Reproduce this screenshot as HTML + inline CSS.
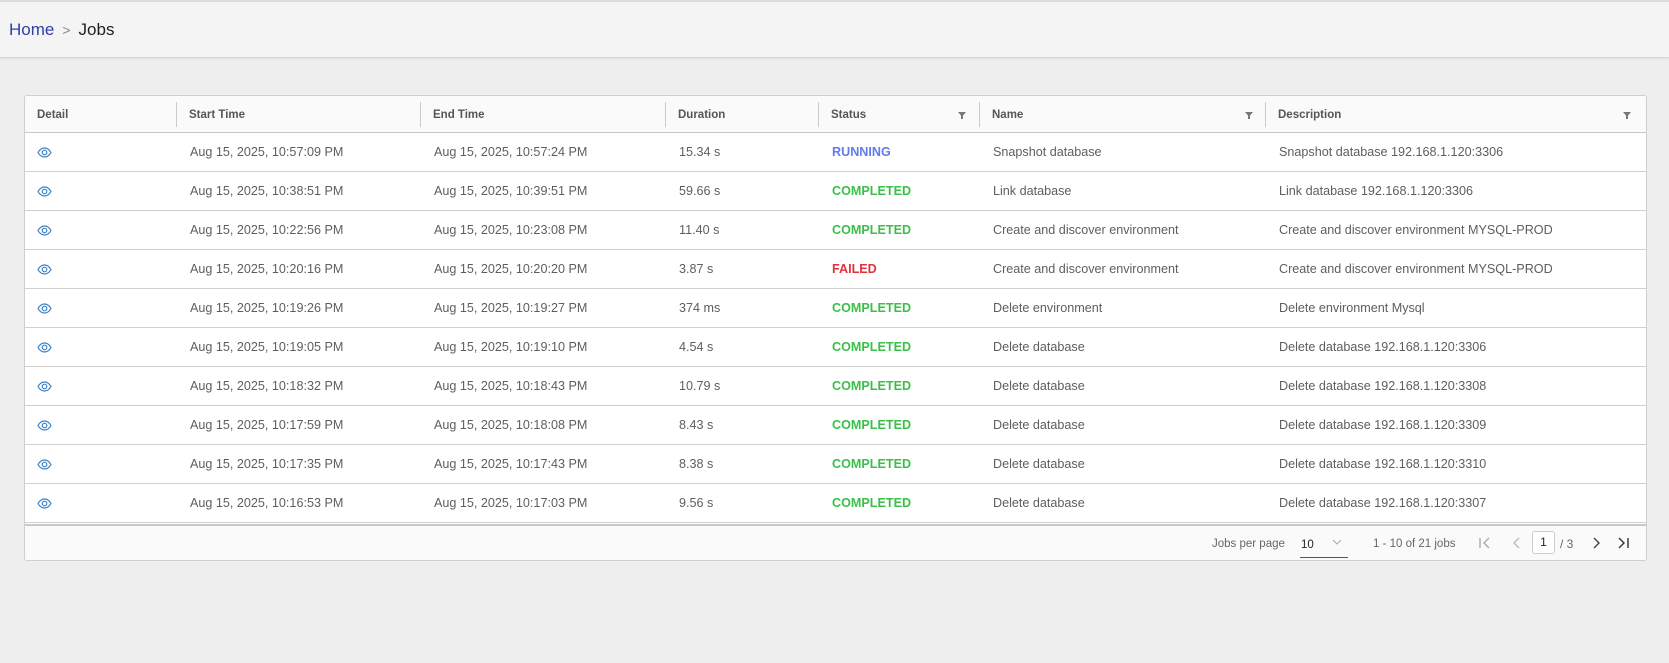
<!DOCTYPE html>
<html><head><style>
*{box-sizing:border-box;margin:0;padding:0}
body{width:1669px;height:663px;background:#eeeeee;font-family:"Liberation Sans",sans-serif;position:relative;overflow:hidden}
.top{position:absolute;left:0;top:0;width:1669px;height:58px;background:#f4f4f4;border-top:2px solid #dcdcdc;border-bottom:1px solid #d8d8d8;box-shadow:0 1px 2px rgba(0,0,0,.08)}
.bc{position:absolute;left:9px;top:18px;font-size:17px;color:#222}
.bc a{color:#2f3fa8;text-decoration:none}
.bc .s{color:#888;margin:0 8px;font-size:14px}
.tbl{position:absolute;left:24px;top:95px;width:1623px;height:466px;background:#fff;border:1px solid #cfcfcf;border-radius:3px;overflow:hidden}
.hd{position:absolute;left:0;top:0;width:100%;height:37px;background:#fafafa;border-bottom:1px solid #c8c8c8}
.c{position:absolute;white-space:nowrap}
.h{font-size:11.5px;font-weight:bold;color:#565656;top:13px}
.sep{position:absolute;top:6px;width:1px;height:25px;background:#ccc}
.row{position:absolute;left:0;width:100%;height:39px;border-bottom:1px solid #d0d0d0;font-size:12.6px;color:#5e5e5e}
.row .c{top:12px}
.ft{position:absolute;left:0;top:428px;width:100%;height:38px;background:#fafafa;border-top:2px solid #c8c8c8;font-size:11.5px;color:#666}
.run{color:#6479ee;font-weight:bold}.ok{color:#3cbf4a;font-weight:bold}.fail{color:#e0323e;font-weight:bold}
svg.f{position:absolute;top:14px}
</style></head><body>
<div class="top"><div class="bc"><a>Home</a><span class="s">&gt;</span>Jobs</div></div>
<div class="tbl">
<div class="hd">
<div class="c h" style="left:12px">Detail</div>
<div class="sep" style="left:151px"></div><div class="c h" style="left:164px">Start Time</div>
<div class="sep" style="left:395px"></div><div class="c h" style="left:408px">End Time</div>
<div class="sep" style="left:640px"></div><div class="c h" style="left:653px">Duration</div>
<div class="sep" style="left:793px"></div><div class="c h" style="left:806px">Status</div>
<svg class="f" style="left:932px" width="10" height="10" viewBox="0 0 10 10"><path d="M1 2h8L6 5.5V9H4V5.5z" fill="#777"/></svg>
<div class="sep" style="left:954px"></div><div class="c h" style="left:967px">Name</div>
<svg class="f" style="left:1219px" width="10" height="10" viewBox="0 0 10 10"><path d="M1 2h8L6 5.5V9H4V5.5z" fill="#777"/></svg>
<div class="sep" style="left:1240px"></div><div class="c h" style="left:1253px">Description</div>
<svg class="f" style="left:1597px" width="10" height="10" viewBox="0 0 10 10"><path d="M1 2h8L6 5.5V9H4V5.5z" fill="#777"/></svg>
</div>
<div id="rows"></div>
<div class="ft">
<div class="c" style="left:1187px;top:12px">Jobs per page</div>
<div class="c" style="left:1276px;top:13px;color:#222">10</div>
<svg style="position:absolute;left:1307px;top:12px" width="10" height="8" viewBox="0 0 10 8"><path d="M1 2l4 4 4-4" stroke="#aaa" fill="none"/></svg>
<div style="position:absolute;left:1275px;top:31px;width:48px;height:1px;background:#556"></div>
<div class="c" style="left:1348px;top:12px">1 - 10 of 21 jobs</div>
<svg style="position:absolute;left:1453px;top:10px" width="14" height="14" viewBox="0 0 14 14"><path d="M2 2v10M11 2L6 7l5 5" stroke="#aaa" fill="none" stroke-width="1.4"/></svg>
<svg style="position:absolute;left:1485px;top:10px" width="14" height="14" viewBox="0 0 14 14"><path d="M9 2L4 7l5 5" stroke="#bbb" fill="none" stroke-width="1.4"/></svg>
<div style="position:absolute;left:1507px;top:5px;width:23px;height:23px;border:1px solid #ccc;border-radius:3px;background:#fff;font-size:12px;color:#222;text-align:center;line-height:21px">1</div>
<div class="c" style="left:1535px;top:11px;font-size:12px">/ 3</div>
<svg style="position:absolute;left:1564px;top:10px" width="14" height="14" viewBox="0 0 14 14"><path d="M5 2l5 5-5 5" stroke="#444" fill="none" stroke-width="1.4"/></svg>
<svg style="position:absolute;left:1591px;top:10px" width="14" height="14" viewBox="0 0 14 14"><path d="M3 2l5 5-5 5M12 2v10" stroke="#333" fill="none" stroke-width="1.4"/></svg>
</div>
</div>
<script>
var d=[["10:57:09","10:57:24","15.34 s","RUNNING","run","Snapshot database","Snapshot database 192.168.1.120:3306"],
["10:38:51","10:39:51","59.66 s","COMPLETED","ok","Link database","Link database 192.168.1.120:3306"],
["10:22:56","10:23:08","11.40 s","COMPLETED","ok","Create and discover environment","Create and discover environment MYSQL-PROD"],
["10:20:16","10:20:20","3.87 s","FAILED","fail","Create and discover environment","Create and discover environment MYSQL-PROD"],
["10:19:26","10:19:27","374 ms","COMPLETED","ok","Delete environment","Delete environment Mysql"],
["10:19:05","10:19:10","4.54 s","COMPLETED","ok","Delete database","Delete database 192.168.1.120:3306"],
["10:18:32","10:18:43","10.79 s","COMPLETED","ok","Delete database","Delete database 192.168.1.120:3308"],
["10:17:59","10:18:08","8.43 s","COMPLETED","ok","Delete database","Delete database 192.168.1.120:3309"],
["10:17:35","10:17:43","8.38 s","COMPLETED","ok","Delete database","Delete database 192.168.1.120:3310"],
["10:16:53","10:17:03","9.56 s","COMPLETED","ok","Delete database","Delete database 192.168.1.120:3307"]];
var h="";d.forEach(function(r,i){h+='<div class="row" style="top:'+(37+i*39)+'px">'+
'<svg style="position:absolute;left:12px;top:14px" width="15" height="11" viewBox="0 0 15 11"><path d="M1 5.5C3 2 5 1 7.5 1S12 2 14 5.5C12 9 10 10 7.5 10S3 9 1 5.5z" fill="none" stroke="#3d82c4" stroke-width="1.2"/><circle cx="7.5" cy="5.5" r="2.3" fill="none" stroke="#3d82c4" stroke-width="1.2"/></svg>'+
'<div class="c" style="left:165px">Aug 15, 2025, '+r[0]+' PM</div>'+
'<div class="c" style="left:409px">Aug 15, 2025, '+r[1]+' PM</div>'+
'<div class="c" style="left:654px">'+r[2]+'</div>'+
'<div class="c '+r[4]+'" style="left:807px">'+r[3]+'</div>'+
'<div class="c" style="left:968px">'+r[5]+'</div>'+
'<div class="c" style="left:1254px">'+r[6]+'</div></div>';});
document.getElementById("rows").innerHTML=h;
</script>
</body></html>
